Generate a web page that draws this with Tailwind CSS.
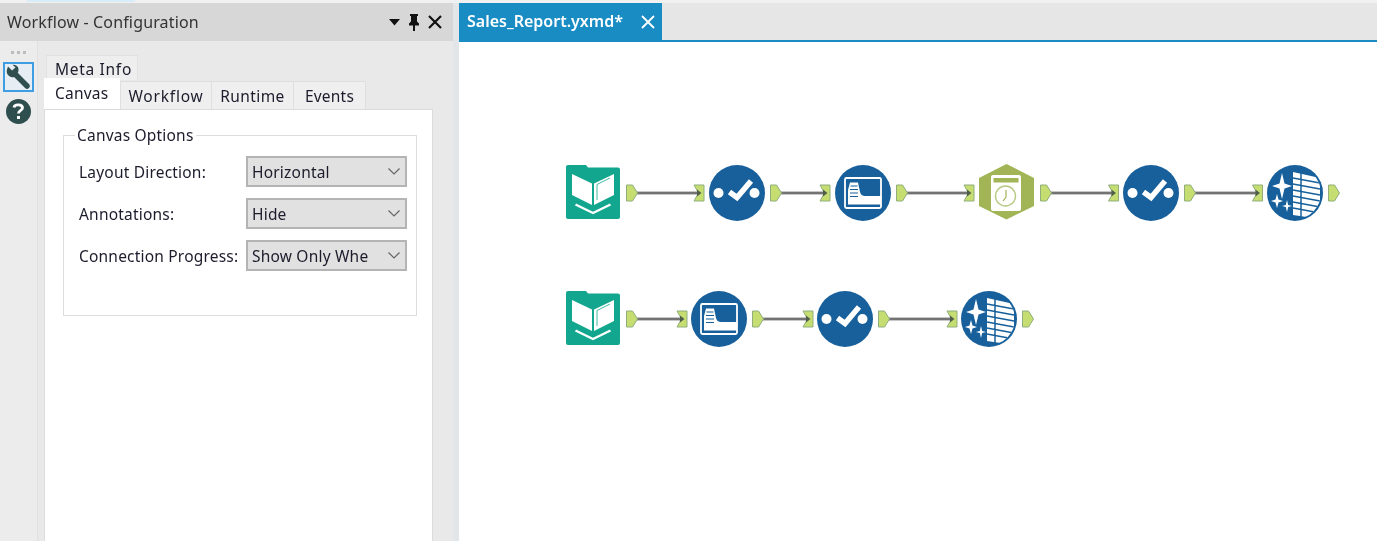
<!DOCTYPE html>
<html lang="en">
<head>
    <meta charset="UTF-8">
    <title>Sales_Report.yxmd</title>
    <script src="https://cdn.jsdelivr.net/npm/@tailwindcss/browser@4"></script>
</head>
<body class="bg-white overflow-hidden">
    <div class="w-[1377px] h-[541px] flex flex-col overflow-hidden blur-[0.4px] font-['Noto_Sans',sans-serif] text-[15.5px] tracking-[0.2px] text-[#1c1c2c]">
        <!-- Strip above the panels -->
        <div class="h-[3px] shrink-0 bg-[#f1f1f1] pl-[27px]">
            <div class="w-[108px] h-[2px] bg-[#d8ecfa]"></div>
        </div>

        <div class="flex-1 flex min-h-0">
            <!-- Configuration panel -->
            <aside class="w-[453px] shrink-0 flex flex-col bg-[#e9e9e9]">
                <div class="h-[38px] shrink-0 bg-[#d7d7d7] flex items-center pl-[7px] pr-[11px]">
                    <span class="flex-1 text-[16px] tracking-[0.15px] text-[#333]">Workflow - Configuration</span>
                    <svg class="w-[11px] h-[7px] mr-[8px]" viewBox="0 0 11 7"><path d="M0 0h11L5.500 6.500z" fill="#111"/></svg>
                    <svg class="w-[12px] h-[18px] mr-[8px]" viewBox="0 0 12 18"><path d="M2 1h8v2H9v5.500l2 2V12.500H1V10.500l2-2V3H2zM5 12h2v6H5z" fill="#111"/></svg>
                    <svg class="w-[14px] h-[14px]" viewBox="0 0 14 14"><path d="M1 1l12 12M13 1L1 13" stroke="#111" stroke-width="2.200" fill="none"/></svg>
                </div>
                <div class="flex-1 flex min-h-0">
                    <!-- Tool rail -->
                    <div class="w-[38px] shrink-0 border-r border-[#e1e1e1] bg-[#ececec] flex flex-col items-center pt-[10px]">
                        <div class="flex gap-[3px] h-[3px] mb-[8px]">
                            <span class="w-[3px] h-[3px] bg-[#bdbdbd]"></span>
                            <span class="w-[3px] h-[3px] bg-[#bdbdbd]"></span>
                            <span class="w-[3px] h-[3px] bg-[#bdbdbd]"></span>
                        </div>
                        <div class="w-[31px] h-[30px] border-2 border-[#3f9de4] bg-[#e6eef4] flex items-center justify-center">
                            <svg class="w-[27px] h-[27px]" viewBox="0 0 27 27">
                                <path d="M9.500 9.500L22 22" stroke="#2f4f4f" stroke-width="5.500" stroke-linecap="round" fill="none"/>
                                <path d="M3 2.500L7 6.500 10.500 3.500 7.500 0.800C12 0 14.800 4 13 8.500L9 13C5 14.500 .5 10 2 5.500z" fill="#2f4f4f"/>
                            </svg>
                        </div>
                        <div class="mt-[7px] w-[25px] h-[25px] rounded-full bg-[#2f4f4f] flex items-center justify-center">
                            <svg class="w-[13px] h-[17px]" viewBox="0 0 13 17">
                                <path d="M2 4.500C2.500 1 10.500 1 10.500 5 10.500 7.500 6.500 7.500 6.500 10.500" stroke="#fff" stroke-width="2.800" fill="none"/>
                                <rect x="5" y="13" width="3" height="3" fill="#fff"/>
                            </svg>
                        </div>
                    </div>

                    <!-- Tabs and options -->
                    <div class="flex-1 min-w-0 pl-[6px] pr-[20px] pt-[14px] flex flex-col">
                        <div class="h-[25px] shrink-0 pl-[2px]">
                            <div class="w-[92px] h-[25px] bg-[#eeeeee] border border-b-0 border-[#e1e1e1] flex items-center pl-[8px] pt-[3px] tracking-[0.7px]">Meta Info</div>
                        </div>
                        <div class="h-[29px] shrink-0 flex items-end relative">
                            <div class="w-[76px] h-[31px] bg-white flex items-start pt-[4px] pl-[11px] z-10">Canvas</div>
                            <div class="w-[92px] h-[28px] bg-[#efefef] border border-b-0 border-[#dfdfdf] flex items-center justify-center pt-[2px] tracking-[0.8px]">Workflow</div>
                            <div class="w-[82px] h-[28px] bg-[#efefef] border border-b-0 border-l-0 border-[#dfdfdf] flex items-center justify-center pt-[2px] tracking-[0.4px]">Runtime</div>
                            <div class="w-[72px] h-[28px] bg-[#efefef] border border-b-0 border-l-0 border-[#dfdfdf] flex items-center justify-center pt-[2px]">Events</div>
                        </div>
                        <div class="flex-1 bg-white border border-b-0 border-[#dcdcdc] pt-[26px] pl-[18px] pr-[15px]">
                            <fieldset class="h-[190px] -mt-[10px] border border-[#dddddd] pl-[15px] pr-[8px]">
                                <legend class="ml-[-4px] px-[2px] leading-[18px]">Canvas Options</legend>
                                <div class="flex flex-col gap-[11px] pt-[12px]">
                                    <div class="flex items-center">
                                        <span class="w-[167px] shrink-0 whitespace-nowrap pt-[2px]">Layout Direction:</span>
                                        <div class="w-[161px] h-[31px] border-2 border-[#b4b4b4] bg-[#e1e1e1] flex items-center pl-[4px] pr-[5px]">
                                            <span class="flex-1 pt-[2px]">Horizontal</span>
                                            <svg class="w-[12px] h-[7px]" viewBox="0 0 12 7"><path d="M.5.500L6 6 11.500.500" stroke="#666" stroke-width="1.200" fill="none"/></svg>
                                        </div>
                                    </div>
                                    <div class="flex items-center">
                                        <span class="w-[167px] shrink-0 whitespace-nowrap pt-[2px]">Annotations:</span>
                                        <div class="w-[161px] h-[31px] border-2 border-[#b4b4b4] bg-[#e1e1e1] flex items-center pl-[4px] pr-[5px]">
                                            <span class="flex-1 pt-[2px]">Hide</span>
                                            <svg class="w-[12px] h-[7px]" viewBox="0 0 12 7"><path d="M.5.500L6 6 11.500.500" stroke="#666" stroke-width="1.200" fill="none"/></svg>
                                        </div>
                                    </div>
                                    <div class="flex items-center">
                                        <span class="w-[167px] shrink-0 whitespace-nowrap pt-[2px]">Connection Progress:</span>
                                        <div class="w-[161px] h-[31px] border-2 border-[#b4b4b4] bg-[#e1e1e1] flex items-center pl-[4px] pr-[5px]">
                                            <span class="flex-1 whitespace-nowrap pt-[2px]">Show Only Whe</span>
                                            <svg class="w-[12px] h-[7px]" viewBox="0 0 12 7"><path d="M.5.500L6 6 11.500.500" stroke="#666" stroke-width="1.200" fill="none"/></svg>
                                        </div>
                                    </div>
                                </div>
                            </fieldset>
                        </div>
                    </div>
                </div>
            </aside>

            <div class="w-[6px] shrink-0 bg-[#e3e6e8]"></div>

            <!-- Workflow canvas -->
            <main class="flex-1 min-w-0 flex flex-col">
                <div class="h-[37px] shrink-0 bg-[#e6e6e6] flex">
                    <div class="w-[203px] bg-[#1a8cc4] text-white flex items-center pl-[8px] pr-[7px]">
                        <span class="flex-1 font-semibold text-[16px] tracking-normal whitespace-nowrap pb-[2px]">Sales_Report.yxmd*</span>
                        <svg class="w-[14px] h-[14px]" viewBox="0 0 14 14"><path d="M1 1l12 12M13 1L1 13" stroke="#fff" stroke-width="1.800" fill="none"/></svg>
                    </div>
                </div>
                <div class="h-[2px] shrink-0 bg-[#1a8cc4]"></div>
                <div class="flex-1 relative bg-white">
                    <svg class="absolute inset-0 w-[918px] h-[499px]" viewBox="459 42 918 499">
                        <defs>
                            <g id="out">
                                <path d="M0-8H6L11 0 6 8H0z" fill="#c6dd72" stroke="#8fae7c" stroke-width="1"/>
                            </g>
                            <g id="in">
                                <path d="M0-8H10V8H0L4.500 0z" fill="#c6dd72" stroke="#8fae7c" stroke-width="1"/>
                                <path d="M3-3.500L7.500 0 3 3.500z" fill="#4f5f4a"/>
                            </g>
                            <g id="book">
                                <path d="M0 2Q0 0 2 0H20L22 2.500H52Q54 2.500 54 4.500V52Q54 54 52 54H2Q0 54 0 52z" fill="#11a68d"/>
                                <path d="M6 9L26 18.500V40L6 30z" fill="#fff"/>
                                <path d="M48 9L28 18.500V40L48 30z" fill="#fff"/>
                                <path d="M44 13L31 19.500V35" fill="none" stroke="#11a68d" stroke-width="0.800"/>
                                <path d="M9.500 39.500L27 48 44.500 39.500" fill="none" stroke="#fff" stroke-width="2.400"/>
                            </g>
                            <g id="check">
                                <circle r="28" fill="#17609b"/>
                                <circle cx="-18.500" cy="0" r="5" fill="#fff"/>
                                <circle cx="17.500" cy="0" r="5" fill="#fff"/>
                                <path d="M-7.500-1L0 4.500 14-12" fill="none" stroke="#fff" stroke-width="5.500"/>
                            </g>
                            <g id="browse">
                                <circle r="28" fill="#17609b"/>
                                <rect x="-18" y="-15" width="36" height="30" rx="1.500" fill="none" stroke="#fff" stroke-width="1.800"/>
                                <path d="M-15 11.500V-3L-13-10.500H-5L-3-1Q-2 3 2 3H18V11.500z" fill="#fff"/>
                                <path d="M-12.500-7H-5.500M-13-3.500H-5M-13 0H-5M-13 3.500H-5" stroke="#17609b" stroke-width="1.200"/>
                            </g>
                            <g id="timer">
                                <path d="M0-28L27.500-14V14L0 27.500-27.500 14V-14z" fill="#a1b557"/>
                                <rect x="-15.500" y="-17" width="30" height="36" rx="2" fill="#fff"/>
                                <rect x="-13" y="-14" width="25" height="4.500" fill="#a1b557"/>
                                <circle cx="-1" cy="4" r="10" fill="none" stroke="#b7c982" stroke-width="1.400"/>
                                <path d="M-.5-2V5L-3.500 9" fill="none" stroke="#a1b557" stroke-width="1.200"/>
                            </g>
                            <clipPath id="disc"><circle r="26"/></clipPath>
                            <g id="output">
                                <circle r="28" fill="#17609b"/>
                                <g clip-path="url(#disc)">
                                    <path d="M-2-21L25-15V26L-2 22z" fill="#fff"/>
                                    <path d="M-2-15L25-10M-2-9L25-4M-2-3L25 2M-2 3L25 8M-2 9L25 14M-2 15L25 20M6-21V25" stroke="#17609b" stroke-width="1.500" fill="none"/>
                                </g>
                                <path d="M-13-20L-10.500-9.500-3-7-10.500-4.500-13 6-15.500-4.500-23-7-15.500-9.500z" fill="#fff"/>
                                <path d="M-18 1L-16.500 6.500-12 8-16.500 9.500-18 15-19.500 9.500-24 8-19.500 6.500z" fill="#fff"/>
                                <path d="M-8 7L-6.800 12-3 13-6.800 14-8 19-9.200 14-13 13-9.200 12z" fill="#fff"/>
                            </g>
                        </defs>

                        <!-- connection lines -->
                        <g stroke="#b5b5b5" stroke-width="3.500" fill="none">
                            <path d="M637 193H698M781 193H824M907 193H968M1051 193H1113M1195 193H1257"/>
                            <path d="M637 319H681M763 319H807M889 319H951"/>
                        </g>
                        <g stroke="#737373" stroke-width="1.800" fill="none">
                            <path d="M637 193H698M781 193H824M907 193H968M1051 193H1113M1195 193H1257"/>
                            <path d="M637 319H681M763 319H807M889 319H951"/>
                        </g>

                        <!-- top row -->
                        <use href="#book" x="566" y="165"/>
                        <use href="#out" x="626.500" y="193"/>
                        <use href="#in" x="694" y="193"/>
                        <use href="#check" x="737" y="193"/>
                        <use href="#out" x="770.500" y="193"/>
                        <use href="#in" x="820" y="193"/>
                        <use href="#browse" x="863" y="193"/>
                        <use href="#out" x="896.500" y="193"/>
                        <use href="#in" x="964" y="193"/>
                        <use href="#timer" x="1006.500" y="192"/>
                        <use href="#out" x="1040.500" y="193"/>
                        <use href="#in" x="1108.500" y="193"/>
                        <use href="#check" x="1151" y="193"/>
                        <use href="#out" x="1184.500" y="193"/>
                        <use href="#in" x="1252.500" y="193"/>
                        <use href="#output" x="1295" y="193"/>
                        <use href="#out" x="1328.500" y="193"/>

                        <!-- bottom row -->
                        <use href="#book" x="566" y="291"/>
                        <use href="#out" x="626.500" y="319"/>
                        <use href="#in" x="677" y="319"/>
                        <use href="#browse" x="719" y="319"/>
                        <use href="#out" x="752.500" y="319"/>
                        <use href="#in" x="803" y="319"/>
                        <use href="#check" x="845" y="319"/>
                        <use href="#out" x="878.500" y="319"/>
                        <use href="#in" x="947" y="319"/>
                        <use href="#output" x="989" y="319"/>
                        <use href="#out" x="1022.500" y="319"/>
                    </svg>
                </div>
            </main>
        </div>
    </div>
</body>
</html>
